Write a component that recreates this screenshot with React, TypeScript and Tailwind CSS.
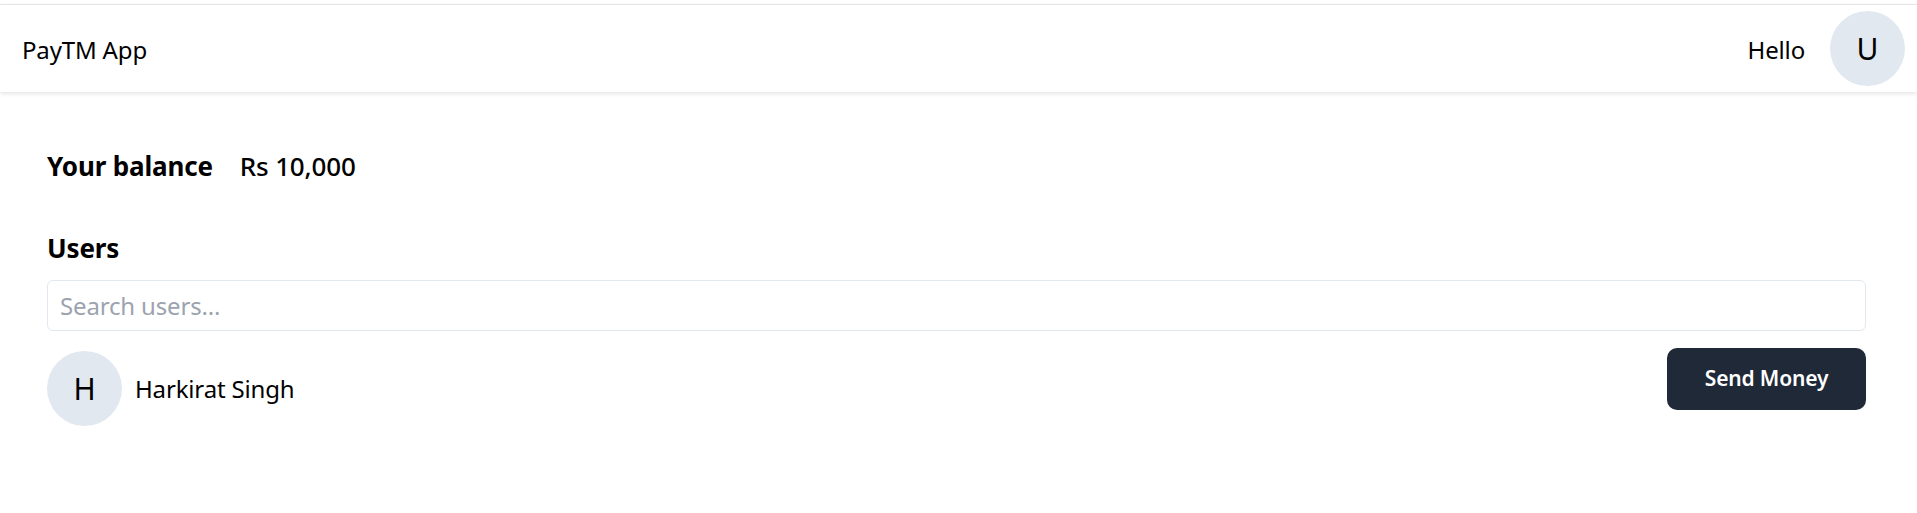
import { useState } from 'react'

const users = [{ id: 1, firstName: 'Harkirat', lastName: 'Singh' }]

const Appbar = () => {
  return (
    <div className="h-[88px] flex justify-between border-t border-[#e5e5e5] shadow-[0_2px_4px_rgba(0,0,0,0.1)]">
      <div className="flex flex-col justify-center h-full ml-[22px] pt-[2px] text-[24px]">PayTM App</div>
      <div className="flex">
        <div className="flex flex-col justify-center h-full mr-[25px] pt-[2px] text-[24px]">Hello</div>
        <div className="rounded-full h-[75px] w-[75px] bg-[#e2e8f0] flex justify-center mt-[6px] mr-[12px]">
          <div className="flex flex-col justify-center h-full text-[30px]">U</div>
        </div>
      </div>
    </div>
  )
}

const Balance = ({ value }: { value: string }) => {
  return (
    <div className="flex items-center h-[44px]">
      <div className="font-bold text-[26px]">Your balance</div>
      <div className="font-medium ml-[27px] text-[26px]">Rs {value}</div>
    </div>
  )
}

const Users = () => {
  const [filter, setFilter] = useState('')

  return (
    <>
      <div className="font-bold mt-[38px] text-[26px] h-[44px] flex items-center">Users</div>
      <div className="mt-[10px] mb-[11px]">
        <input
          value={filter}
          onChange={e => setFilter(e.target.value)}
          type="text"
          placeholder="Search users..."
          className="w-full h-[51px] px-[12px] border border-[#e2e8f0] rounded-[6px] text-[24px] placeholder:text-[#9ca3af] outline-none"
        />
      </div>
      <div>
        {users.map(user => (
          <User key={user.id} user={user} />
        ))}
      </div>
    </>
  )
}

const User = ({ user }: { user: { firstName: string; lastName: string } }) => {
  return (
    <div className="flex justify-between">
      <div className="flex">
        <div className="rounded-full h-[75px] w-[75px] bg-[#e2e8f0] flex justify-center mt-[9px] mr-[13px]">
          <div className="flex flex-col justify-center h-full text-[30px]">{user.firstName[0]}</div>
        </div>
        <div className="flex flex-col justify-center h-[75px] mt-[9px] text-[24px]">
          {user.firstName} {user.lastName}
        </div>
      </div>

      <div className="flex flex-col">
        <button
          type="button"
          className="mt-[6px] w-[199px] h-[62px] text-white bg-[#1f2937] rounded-[10px] text-[21px] font-semibold"
        >
          Send Money
        </button>
      </div>
    </div>
  )
}

export default function App() {
  return (
    <div className="bg-white text-black font-['Noto_Sans',sans-serif] tracking-[-0.01em] min-h-[513px]">
      <div className="h-[4px]" />
      <Appbar />
      <div className="ml-[47px] mr-[51px] mt-[52px]">
        <Balance value="10,000" />
        <Users />
      </div>
    </div>
  )
}
